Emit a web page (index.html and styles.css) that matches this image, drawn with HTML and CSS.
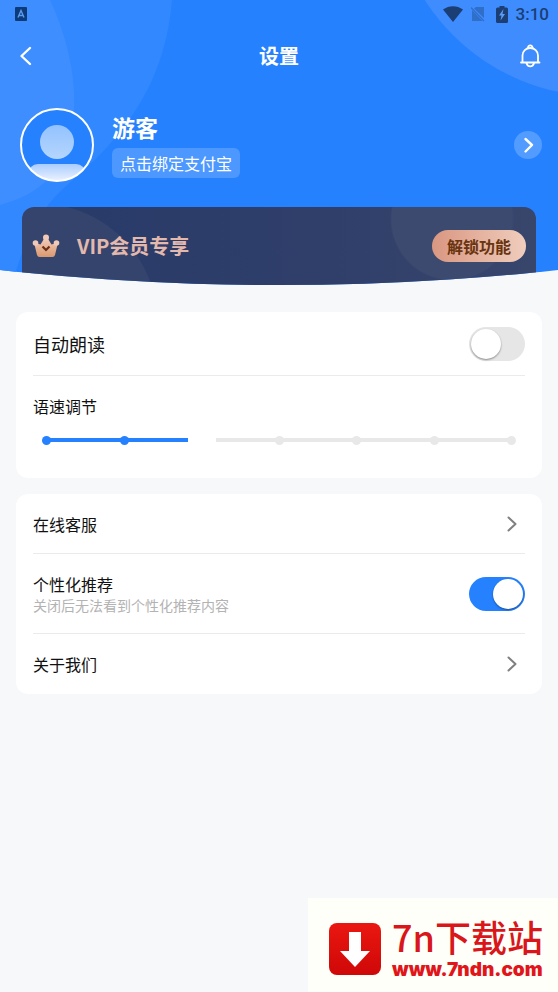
FILE: index.html
```html
<!DOCTYPE html>
<html lang="zh-CN">
<head>
<meta charset="utf-8">
<meta name="viewport" content="width=device-width, initial-scale=1">
<title>设置</title>
<link rel="stylesheet" href="styles.css">
</head>
<body>
<header class="hero">
  <svg class="hero-decor hero-decor-left" width="180" height="285" viewBox="0 0 180 285" aria-hidden="true">
    <path fill="#3288ff" d="M0 0H172C167 60 145 105 108 146C85 172 60 188 46 208C30 230 20 255 12 285H0Z"/>
    <path fill="#3f8eff" d="M0 0H50C68 38 76 80 74 110C71 160 50 192 0 205Z"/>
  </svg>
  <svg class="hero-decor hero-decor-right" width="140" height="100" viewBox="0 0 140 100" aria-hidden="true">
    <circle cx="182" cy="-112" r="208" fill="#3f8cff"/>
  </svg>

  <div class="status">
    <svg width="12" height="14" viewBox="0 0 12 14" aria-hidden="true">
      <rect width="12" height="14" rx="1" fill="#0d3a78"/>
      <path d="M3 10.5L6 3.5L9 10.5M4 8.5H8" fill="none" stroke="#5a9bf0" stroke-width="1.4"/>
    </svg>
    <div class="status-right">
      <svg width="20" height="16" viewBox="0 0 20 16" aria-hidden="true"><path fill="#1b3f75" d="M0 3.5C6 -1 14 -1 20 3.5L10 16Z"/></svg>
      <svg class="sim" width="14" height="16" viewBox="0 0 14 16" aria-hidden="true">
        <path fill="#2f6fca" d="M5 1H13V12L3 2.500ZM1 4L11.500 15H1Z"/>
        <path d="M0 1.500L13 15" stroke="#2f6fca" stroke-width="1.300"/>
      </svg>
      <svg class="battery" width="12" height="17" viewBox="0 0 12 17" aria-hidden="true">
        <path fill="#1b3f75" d="M3.500 0H8.500V1.500H10.500Q12 1.500 12 3V15.500Q12 17 10.500 17H1.500Q0 17 0 15.500V3Q0 1.500 1.500 1.500H3.500Z"/>
        <path fill="#5b9cf8" d="M7.500 3L3 9.500H5.500L4.500 14.500L9 8H6.500Z"/>
      </svg>
      <span class="time">3:10</span>
    </div>
  </div>

  <nav class="nav">
    <button class="icon-btn" type="button" aria-label="返回">
      <svg width="24" height="24" viewBox="0 0 24 24"><path d="M14 4L5.500 12L14 20" fill="none" stroke="#fff" stroke-width="2.400" stroke-linecap="round" stroke-linejoin="round"/></svg>
    </button>
    <h1 class="title">设置</h1>
    <button class="icon-btn" type="button" aria-label="通知">
      <svg width="24" height="24" viewBox="0 0 24 24" fill="none" stroke="#fff" stroke-width="1.800" stroke-linecap="round" stroke-linejoin="round">
        <path d="M3 18.500H21.500M4.500 18.500V11.500C4.500 7 8 4 12.200 4C16.500 4 20 7 20 11.500V18.500"/>
        <path d="M10 4C9.500 0.500 15 0.500 14.500 4M8.500 19C9.500 23.500 15 23.500 16 19"/>
      </svg>
    </button>
  </nav>

  <section class="profile">
    <svg class="avatar" width="74" height="74" viewBox="0 0 74 74" role="img" aria-label="头像">
      <defs>
        <linearGradient id="head" x1="0" y1="0" x2="0" y2="1"><stop offset="0" stop-color="#93c2ff"/><stop offset="1" stop-color="#b5d6fd"/></linearGradient>
        <linearGradient id="body" x1="0" y1="0" x2="0" y2="1"><stop offset="0" stop-color="#a9cdff"/><stop offset="0.6" stop-color="#f0f4ff"/></linearGradient>
        <clipPath id="ring"><circle cx="37" cy="37" r="36"/></clipPath>
      </defs>
      <circle cx="37" cy="37" r="36" fill="#2681ff"/>
      <rect x="8" y="56" width="58" height="30" rx="10" fill="url(#body)" clip-path="url(#ring)"/>
      <circle cx="37" cy="34" r="17" fill="url(#head)"/>
      <circle cx="37" cy="37" r="36" fill="none" stroke="#fff" stroke-width="2"/>
    </svg>
    <div class="profile-text">
      <h2 class="name">游客</h2>
      <button class="bind" type="button">点击绑定支付宝</button>
    </div>
    <button class="round-btn" type="button" aria-label="个人资料">
      <svg width="28" height="28" viewBox="0 0 28 28"><path d="M11.500 8L18 14L11.500 20.500" fill="none" stroke="#fff" stroke-width="2.400" stroke-linecap="round" stroke-linejoin="round"/></svg>
    </button>
  </section>

  <section class="vip">
    <svg class="crown" width="28" height="24" viewBox="0 0 28 24" aria-hidden="true">
      <defs><linearGradient id="gold" x1="0" y1="0" x2="0" y2="1"><stop offset="0" stop-color="#f3cdbc"/><stop offset="1" stop-color="#d9986f"/></linearGradient></defs>
      <path fill="url(#gold)" d="M2 8.500L8.500 10.500L12.500 4H15.500L19.500 10.500L26 8.500L23 21Q22.500 23 20.500 23H7.500Q5.500 23 5 21Z"/>
      <g fill="#f0c9b9"><circle cx="3.500" cy="9" r="2.800"/><circle cx="14" cy="3.500" r="3"/><circle cx="24.500" cy="9" r="2.800"/></g>
      <path d="M10.500 12.500L14 16L17.500 12.500" fill="none" stroke="#6b3018" stroke-width="2.200"/>
    </svg>
    <span class="vip-title">VIP会员专享</span>
    <button class="unlock" type="button">解锁功能</button>
  </section>
</header>

<main class="content">
  <section class="card">
    <div class="row row-tall">
      <label class="label-lg" for="auto">自动朗读</label>
      <input class="switch" id="auto" type="checkbox" role="switch">
    </div>
    <div class="speed">
      <label for="speed">语速调节</label>
      <div class="slider">
        <div class="track"><i class="on"></i><i class="on"></i><i class="on"></i><i></i><i></i><i></i><i></i></div>
        <input class="range" id="speed" type="range" min="0" max="6" value="2">
      </div>
    </div>
  </section>

  <section class="card">
    <a class="row" href="#service">
      <span>在线客服</span>
      <svg class="chevron" width="24" height="24" viewBox="0 0 24 24" aria-hidden="true"><path d="M7.500 5.500L14.500 12L7.500 18.500"/></svg>
    </a>
    <div class="row row-desc">
      <div class="stack">
        <label for="recommend">个性化推荐</label>
        <span class="desc">关闭后无法看到个性化推荐内容</span>
      </div>
      <input class="switch" id="recommend" type="checkbox" role="switch" checked>
    </div>
    <a class="row" href="#about">
      <span>关于我们</span>
      <svg class="chevron" width="24" height="24" viewBox="0 0 24 24" aria-hidden="true"><path d="M7.500 5.500L14.500 12L7.500 18.500"/></svg>
    </a>
  </section>
</main>

<footer class="brand">
  <svg width="54" height="54" viewBox="0 0 54 54" aria-hidden="true">
    <defs><linearGradient id="red" x1="0" y1="0" x2="0" y2="1"><stop offset="0" stop-color="#ea1710"/><stop offset="1" stop-color="#cf0808"/></linearGradient></defs>
    <rect x="1" y="1" width="52" height="52" rx="8" fill="url(#red)"/>
    <path fill="#fff" d="M21 10H33V29H42L27 45L12 29H21Z"/>
  </svg>
  <div class="brand-text">
    <span class="brand-name">7n下载站</span>
    <span class="brand-url">www.7ndn.com</span>
  </div>
</footer>
</body>
</html>
```
FILE: styles.css
```css
* { box-sizing: border-box; }

body {
  margin: 0;
  min-height: 100vh;
  display: flex;
  flex-direction: column;
  background: #f6f8fa;
  color: #111;
  font: 16px/24px "Noto Sans CJK SC", sans-serif;
}

button {
  border: 0;
  padding: 0;
  background: none;
  color: inherit;
  font: inherit;
}

svg { display: block; flex: none; }

h1, h2 { margin: 0; }

/* Blue header, cut off by a shallow arc along the bottom */
.hero {
  position: relative;
  background: #2681ff;
  color: #fff;
  clip-path: ellipse(156% 100% at 50% 0);
}

.hero-decor { position: absolute; top: 0; }
.hero-decor-left { left: 0; }
.hero-decor-right { right: 0; }

.status {
  position: relative;
  display: flex;
  align-items: center;
  justify-content: space-between;
  height: 28px;
  padding: 0 9px 0 15px;
}

.status-right { display: flex; align-items: center; }
.sim { margin-left: 8px; }
.battery { margin-left: 11px; }

.time {
  margin-left: 8px;
  color: #1b3f75;
  font: 500 17px/28px Roboto, sans-serif;
}

.nav {
  position: relative;
  display: flex;
  align-items: center;
  justify-content: space-between;
  height: 56px;
  padding: 0 16px;
}

.icon-btn { width: 24px; height: 24px; }

.title { font-size: 20px; line-height: 28px; font-weight: 700; }

.profile {
  position: relative;
  display: flex;
  align-items: center;
  gap: 18px;
  padding: 24px 16px 25px 20px;
}

.profile-text { flex: 1; }

.name { font-size: 23px; line-height: 34px; font-weight: 700; }

.bind {
  height: 30px;
  margin: 4px 0 2px;
  padding: 0 8px;
  border-radius: 6px;
  background: #4c98ff;
  line-height: 30px;
}

.round-btn { border-radius: 50%; background: #529bff; }

.vip {
  position: relative;
  display: flex;
  align-items: center;
  height: 78px;
  margin: 0 22px;
  padding: 0 10px;
  border-radius: 12px 12px 0 0;
  background:
    radial-gradient(circle at 16px 116px, #35446c 119px, transparent 120px),
    radial-gradient(circle at 430px 12px, #3d4a70 60px, transparent 62px),
    linear-gradient(90deg, #273a69, #303f6a 60%, #38466c);
}

.vip-title {
  flex: 1;
  margin-left: 17px;
  color: #e3b9ae;
  font-size: 20px;
  font-weight: 700;
}

.unlock {
  height: 32px;
  padding: 0 15px;
  border-radius: 16px;
  background: linear-gradient(90deg, #d99781, #f0cdbd);
  color: #693410;
  font-weight: 700;
}

.content {
  display: flex;
  flex-direction: column;
  gap: 16px;
  padding: 27px 16px 24px;
}

.card {
  padding: 0 17px;
  border-radius: 12px;
  background: #fff;
}

.row {
  display: flex;
  align-items: center;
  justify-content: space-between;
  height: 60px;
  border-bottom: 1px solid #ebebeb;
  color: inherit;
  text-decoration: none;
}

.row:last-child { border-bottom: 0; }
.row-tall { height: 64px; }
.row-desc { height: 80px; }

.label-lg { font-size: 18px; }

.stack { display: flex; flex-direction: column; padding-bottom: 2px; }
.desc { color: #b3b3b3; font-size: 14px; line-height: 18px; }

.chevron {
  fill: none;
  stroke: #808080;
  stroke-width: 2;
  stroke-linecap: round;
  stroke-linejoin: round;
}

.switch {
  appearance: none;
  display: flex;
  width: 56px;
  height: 34px;
  margin: 0;
  padding: 2px;
  border-radius: 17px;
  background: #e6e6e6;
}

.switch::before {
  content: "";
  width: 30px;
  height: 30px;
  border-radius: 50%;
  background: #fff;
  box-shadow: 0 1px 2px rgba(0, 0, 0, 0.4);
}

.switch:checked { justify-content: flex-end; background: #2681ff; }

.speed { padding: 18px 0 24px; }
.speed label { display: block; }

.slider { display: grid; margin-top: 8px; }
.slider > * { grid-area: 1 / 1; }

.track {
  align-self: center;
  display: flex;
  align-items: center;
  justify-content: space-between;
  height: 10px;
  margin: 0 9px;
  background: linear-gradient(90deg, #2681ff 33%, #e8e8e8 33%) center / calc(100% - 10px) 4px no-repeat;
}

.track i { width: 9px; height: 9px; border-radius: 50%; background: #e8e8e8; }
.track .on { background: #2681ff; }

.range {
  appearance: none;
  width: 100%;
  height: 28px;
  margin: 0;
  background: none;
}

.range::-webkit-slider-thumb {
  appearance: none;
  width: 28px;
  height: 28px;
  background: #fff;
}

.brand {
  display: flex;
  align-items: center;
  align-self: flex-end;
  gap: 10px;
  height: 94px;
  margin-top: auto;
  padding: 8px 15px 0 20px;
  background: #fffffa;
}

.brand-text { display: flex; flex-direction: column; padding-bottom: 8px; }

.brand-name { color: #d9161a; font-size: 36px; font-weight: 500; line-height: 50px; }

.brand-url {
  color: #e0161a;
  font: 900 19px/18px Inter, sans-serif;
}
```
